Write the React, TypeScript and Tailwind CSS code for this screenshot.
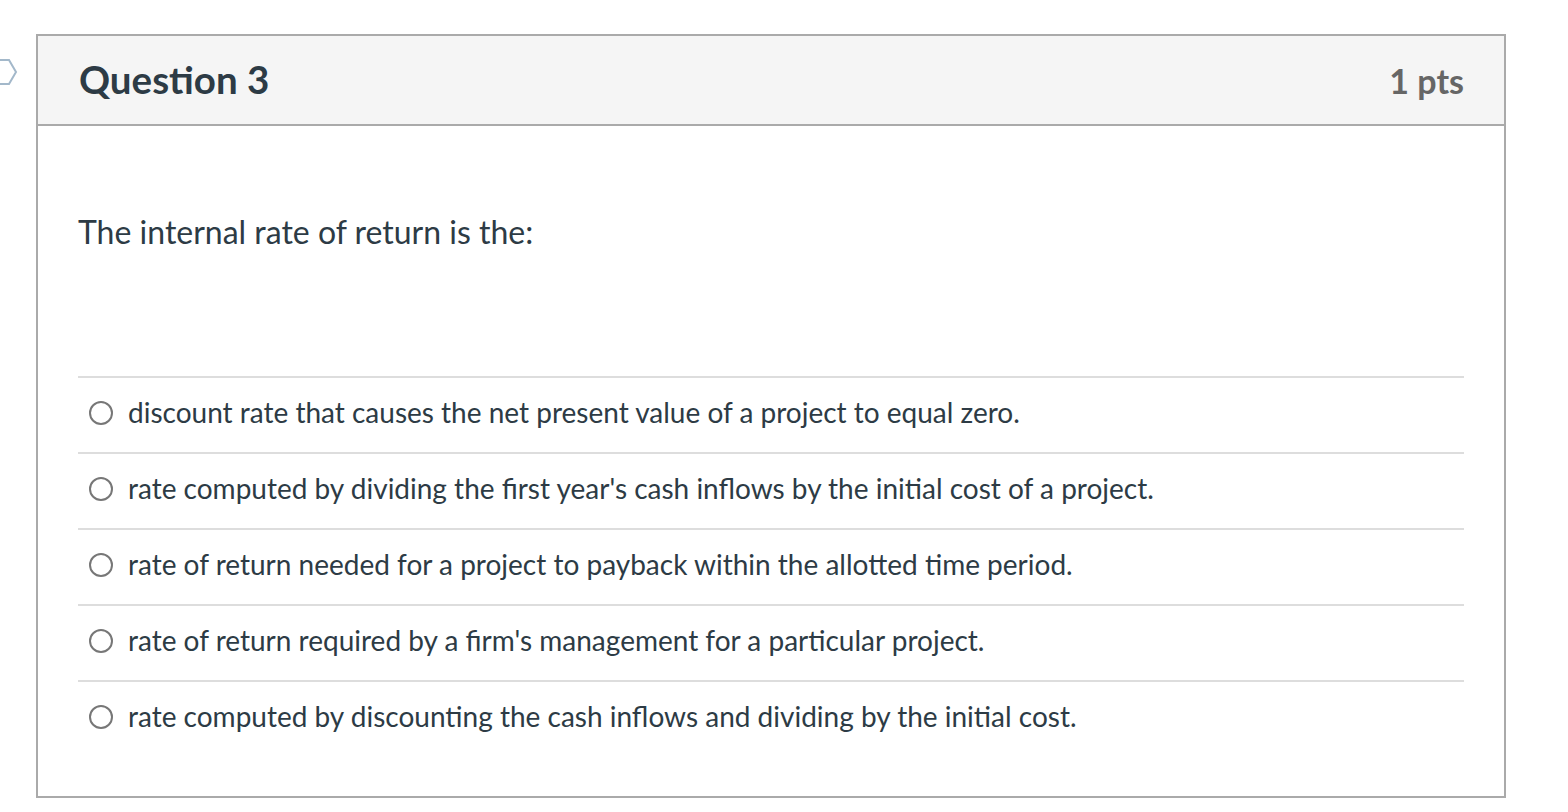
const answers = [
  'discount rate that causes the net present value of a project to equal zero.',
  "rate computed by dividing the first year's cash inflows by the initial cost of a project.",
  'rate of return needed for a project to payback within the allotted time period.',
  "rate of return required by a firm's management for a particular project.",
  'rate computed by discounting the cash inflows and dividing by the initial cost.',
];

export default function App() {
  return (
    <div className="relative min-h-[812px] w-[1568px] bg-white pt-[34px] pl-[36px]" style={{ fontFamily: 'Lato, "Open Sans", sans-serif' }}>
      {/* question flag */}
      <svg className="absolute left-0 top-[58px]" width="20" height="30" viewBox="0 0 20 30">
        <path d="M-6 2 H9 L16 14 L9 26 H-6" fill="#fff" stroke="#a3b8ca" strokeWidth="2" />
      </svg>

      <div className="w-[1470px] h-[764px] border-2 border-[#aaaaaa] flex flex-col">
        {/* Header */}
        <div className="h-[90px] bg-[#f5f5f5] border-b-2 border-[#aaaaaa] flex items-center justify-between pl-[41px] pr-[40px]">
          <h2 className="text-[38.5px] font-bold text-[#2d3b45]">Question 3</h2>
          <span className="text-[34px] font-bold text-[#666666]">1 pts</span>
        </div>

        {/* Body */}
        <div className="pl-[40px] pr-[40px]">
          <p className="mt-[88px] text-[32px] leading-[36px] text-[#2d3b45]">The internal rate of return is the:</p>

          <div className="mt-[126px]">
            {answers.map((a) => (
              <div key={a} className="h-[76px] border-t-2 border-[#dddddd] flex items-center pl-[11px] pb-[7px]">
                <span className="w-[24px] h-[24px] rounded-full border-2 border-[#777777] bg-white shrink-0 mt-[3px]" />
                <span className="ml-[15px] text-[28px] text-[#2d3b45]">{a}</span>
              </div>
            ))}
          </div>
        </div>
      </div>
    </div>
  );
}
